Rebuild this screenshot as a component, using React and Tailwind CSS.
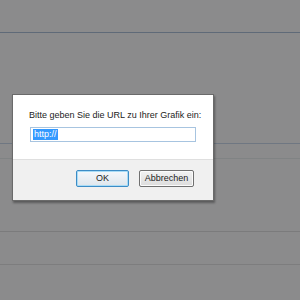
import React from "react";

/* ── Faded page behind the prompt ── */
function Backdrop() {
  return (
    <div className="flex flex-col w-[300px] h-[300px] bg-[#8b8b8c]">
      <div className="h-[32px] shrink-0" />
      <div className="h-[111px] shrink-0 border-t border-[#5f6a78]" />
      <div className="h-[15px] shrink-0 border-t border-[#6f7782]" />
      <div className="h-[73px] shrink-0 border-t border-[#808384]" />
      <div className="h-[33px] shrink-0 border-t border-[#7b7b7c]" />
      <div className="flex-1 border-t border-[#7d7d7e]" />
    </div>
  );
}

/* ── Prompt Dialog ── */
function PromptDialog() {
  return (
    <div className="absolute left-[12px] top-[94px] w-[202px] h-[107px] flex flex-col border border-[#6a6a6a] shadow-[1px_2px_2px_rgba(0,0,0,0.35)] font-['Liberation_Sans',Arial,sans-serif] text-[9px] text-[#1c1c1c]">
      <div className="h-[64px] shrink-0 bg-white pl-[16px] pt-[15px]">
        <p className="leading-[11px]">Bitte geben Sie die URL zu Ihrer Grafik ein:</p>
        <div className="mt-[6px] ml-[1px] w-[166px] h-[15px] border border-[#a7c4e0] bg-white flex items-center pl-[2px]">
          <span className="bg-[#3399ff] text-white leading-[11px] px-[1px]">http://</span>
        </div>
      </div>
      <div className="flex-1 bg-[#f0f0f0] border-t border-[#dfdfdf] flex justify-end items-start pt-[10px] pr-[19px] gap-[10px]">
        <button className="w-[53px] h-[17px] rounded-[2px] border border-[#3c8cc6] bg-gradient-to-b from-[#f4f8fc] to-[#dfe6ec] shadow-[inset_0_0_0_1px_#a9dcf6] text-[9px] leading-none">
          OK
        </button>
        <button className="w-[55px] h-[17px] rounded-[2px] border border-[#707070] bg-gradient-to-b from-[#f3f3f3] to-[#dcdcdc] shadow-[inset_0_0_0_1px_#fbfbfb] text-[9px] leading-none">
          Abbrechen
        </button>
      </div>
    </div>
  );
}

export default function App() {
  return (
    <div className="relative w-[300px] h-[300px] overflow-hidden">
      <Backdrop />
      <PromptDialog />
    </div>
  );
}
